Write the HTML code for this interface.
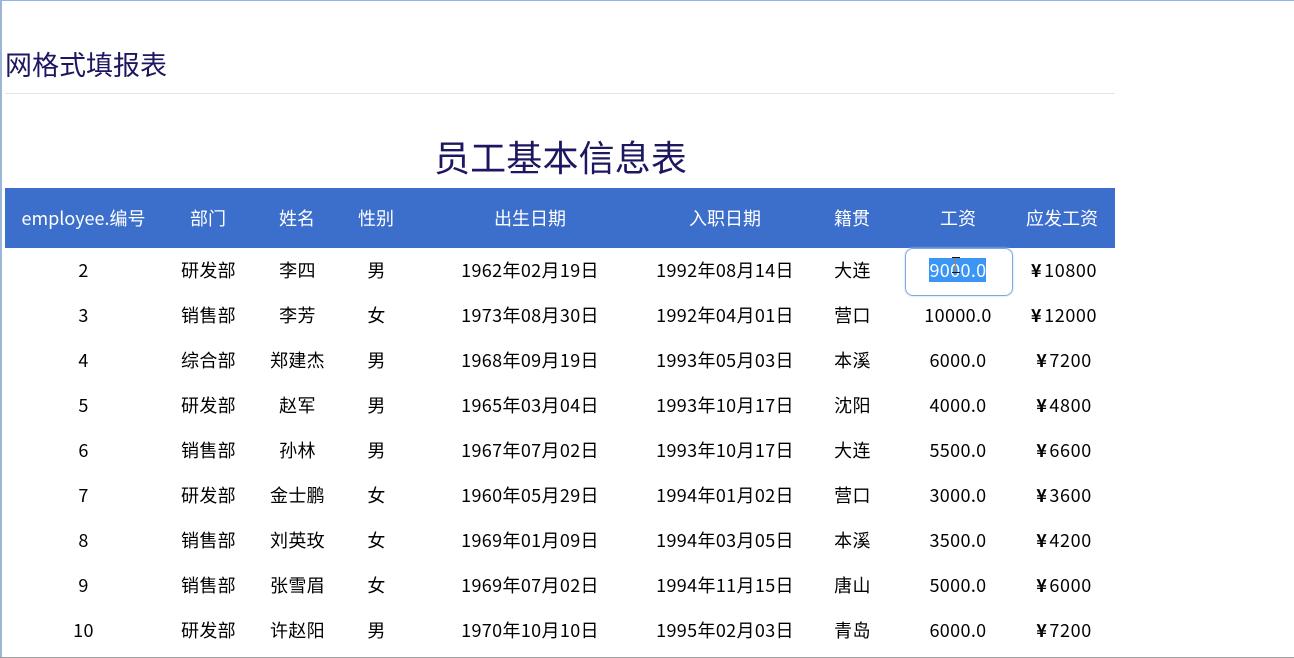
<!DOCTYPE html>
<html lang="zh"><head><meta charset="utf-8"><style>
html,body{margin:0;padding:0;background:#fff}
body{width:1294px;height:658px;position:relative;overflow:hidden;font-family:"Noto Sans CJK SC","Liberation Sans",sans-serif;color:#000}
.a{position:absolute;white-space:nowrap}
.c{position:absolute;width:200px;margin-left:-100px;text-align:center;font-size:18px;line-height:24px;height:24px;white-space:nowrap;letter-spacing:.35px}
.h{color:#fff;top:206px;letter-spacing:0}
.p{left:1064px;letter-spacing:.6px}
.y{margin-right:2px;font-weight:700;font-size:18px}
</style></head><body>
<div class="a" style="left:0;top:0;width:1294px;height:1px;background:#8fb6e6"></div>
<div class="a" style="left:0;top:0;width:2px;height:658px;background:#9db6d8"></div>
<div class="a" style="left:0;top:657px;width:1294px;height:1px;background:#a0a0a0"></div>
<div class="a" style="left:5px;top:45px;font-size:27px;line-height:38px;color:#1c1760">网格式填报表</div>
<div class="a" style="left:5px;top:93px;width:1110px;height:1px;background:#e4e4e4"></div>
<div class="a" style="left:434px;top:131px;font-size:36px;line-height:50px;letter-spacing:.15px;color:#1c1760">员工基本信息表</div>
<div class="a" style="left:5px;top:188px;width:1110px;height:60px;background:#3c6ecc"></div>
<div class="c h" style="left:83.500px">employee.编号</div><div class="c h" style="left:208px">部门</div><div class="c h" style="left:297px">姓名</div><div class="c h" style="left:376px">性别</div><div class="c h" style="left:530px">出生日期</div><div class="c h" style="left:725px">入职日期</div><div class="c h" style="left:852px">籍贯</div><div class="c h" style="left:958px">工资</div><div class="c h" style="left:1062px">应发工资</div>
<div class="a" style="left:905px;top:248px;width:106px;height:46px;border:1px solid #80a8e0;border-radius:8px;box-shadow:0 0 2px #b8cff0"></div>
<div class="a" style="left:929px;top:258px;width:57px;height:24px;background:#3b95f5"></div>
<div class="c" style="left:83.500px;top:258px">2</div><div class="c" style="left:208.500px;top:258px">研发部</div><div class="c" style="left:297.500px;top:258px">李四</div><div class="c" style="left:376.500px;top:258px">男</div><div class="c" style="left:530px;top:258px">1962年02月19日</div><div class="c" style="left:725px;top:258px">1992年08月14日</div><div class="c" style="left:852.500px;top:258px">大连</div><div class="c" style="left:958px;top:258px;color:#fff">9000.0</div><div class="c p" style="top:258px"><span class="y">¥</span>10800</div>
<div class="c" style="left:83.500px;top:303px">3</div><div class="c" style="left:208.500px;top:303px">销售部</div><div class="c" style="left:297.500px;top:303px">李芳</div><div class="c" style="left:376.500px;top:303px">女</div><div class="c" style="left:530px;top:303px">1973年08月30日</div><div class="c" style="left:725px;top:303px">1992年04月01日</div><div class="c" style="left:852.500px;top:303px">营口</div><div class="c" style="left:958px;top:303px">10000.0</div><div class="c p" style="top:303px"><span class="y">¥</span>12000</div>
<div class="c" style="left:83.500px;top:348px">4</div><div class="c" style="left:208.500px;top:348px">综合部</div><div class="c" style="left:297.500px;top:348px">郑建杰</div><div class="c" style="left:376.500px;top:348px">男</div><div class="c" style="left:530px;top:348px">1968年09月19日</div><div class="c" style="left:725px;top:348px">1993年05月03日</div><div class="c" style="left:852.500px;top:348px">本溪</div><div class="c" style="left:958px;top:348px">6000.0</div><div class="c p" style="top:348px"><span class="y">¥</span>7200</div>
<div class="c" style="left:83.500px;top:393px">5</div><div class="c" style="left:208.500px;top:393px">研发部</div><div class="c" style="left:297.500px;top:393px">赵军</div><div class="c" style="left:376.500px;top:393px">男</div><div class="c" style="left:530px;top:393px">1965年03月04日</div><div class="c" style="left:725px;top:393px">1993年10月17日</div><div class="c" style="left:852.500px;top:393px">沈阳</div><div class="c" style="left:958px;top:393px">4000.0</div><div class="c p" style="top:393px"><span class="y">¥</span>4800</div>
<div class="c" style="left:83.500px;top:438px">6</div><div class="c" style="left:208.500px;top:438px">销售部</div><div class="c" style="left:297.500px;top:438px">孙林</div><div class="c" style="left:376.500px;top:438px">男</div><div class="c" style="left:530px;top:438px">1967年07月02日</div><div class="c" style="left:725px;top:438px">1993年10月17日</div><div class="c" style="left:852.500px;top:438px">大连</div><div class="c" style="left:958px;top:438px">5500.0</div><div class="c p" style="top:438px"><span class="y">¥</span>6600</div>
<div class="c" style="left:83.500px;top:483px">7</div><div class="c" style="left:208.500px;top:483px">研发部</div><div class="c" style="left:297.500px;top:483px">金士鹏</div><div class="c" style="left:376.500px;top:483px">女</div><div class="c" style="left:530px;top:483px">1960年05月29日</div><div class="c" style="left:725px;top:483px">1994年01月02日</div><div class="c" style="left:852.500px;top:483px">营口</div><div class="c" style="left:958px;top:483px">3000.0</div><div class="c p" style="top:483px"><span class="y">¥</span>3600</div>
<div class="c" style="left:83.500px;top:528px">8</div><div class="c" style="left:208.500px;top:528px">销售部</div><div class="c" style="left:297.500px;top:528px">刘英玫</div><div class="c" style="left:376.500px;top:528px">女</div><div class="c" style="left:530px;top:528px">1969年01月09日</div><div class="c" style="left:725px;top:528px">1994年03月05日</div><div class="c" style="left:852.500px;top:528px">本溪</div><div class="c" style="left:958px;top:528px">3500.0</div><div class="c p" style="top:528px"><span class="y">¥</span>4200</div>
<div class="c" style="left:83.500px;top:573px">9</div><div class="c" style="left:208.500px;top:573px">销售部</div><div class="c" style="left:297.500px;top:573px">张雪眉</div><div class="c" style="left:376.500px;top:573px">女</div><div class="c" style="left:530px;top:573px">1969年07月02日</div><div class="c" style="left:725px;top:573px">1994年11月15日</div><div class="c" style="left:852.500px;top:573px">唐山</div><div class="c" style="left:958px;top:573px">5000.0</div><div class="c p" style="top:573px"><span class="y">¥</span>6000</div>
<div class="c" style="left:83.500px;top:618px">10</div><div class="c" style="left:208.500px;top:618px">研发部</div><div class="c" style="left:297.500px;top:618px">许赵阳</div><div class="c" style="left:376.500px;top:618px">男</div><div class="c" style="left:530px;top:618px">1970年10月10日</div><div class="c" style="left:725px;top:618px">1995年02月03日</div><div class="c" style="left:852.500px;top:618px">青岛</div><div class="c" style="left:958px;top:618px">6000.0</div><div class="c p" style="top:618px"><span class="y">¥</span>7200</div>
<svg class="a" style="left:950px;top:256px" width="12" height="18" viewBox="0 0 12 18"><path d="M5.500 1.500V16.500" fill="none" stroke="#c87a2a" stroke-width="1"/><path d="M2 1.500H10M2 16.500H10" fill="none" stroke="#111" stroke-width="1"/></svg>
</body></html>
